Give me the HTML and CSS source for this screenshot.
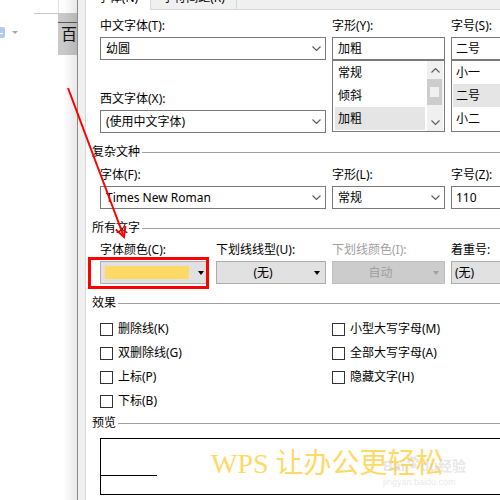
FILE: index.html
```html
<!DOCTYPE html>
<html lang="zh-CN">
<head>
<meta charset="utf-8">
<title>字体</title>
<link rel="stylesheet" href="styles.css">
</head>
<body>
<div class="screen">
  <div class="desk">
    <div class="desk-icon"><span class="desk-icon-line"></span></div>
    <div class="desk-caret"></div>
    <div class="desk-vline"></div>
    <div class="desk-rule"></div>
    <div class="desk-cell"><span class="cell-line"></span><span class="cell-char">百</span></div>
    <div class="desk-shadow"></div>
  </div>

  <div class="dialog">
    <div class="tabs">
      <div class="tab tab-active">字体(N)</div>
      <div class="tab tab-other">字符间距(R)</div>
      <div class="tab-rest"></div>
    </div>

    <div class="page">
      <div class="fields row-top">
        <div class="col col-wide">
          <div class="label">中文字体(T):</div>
          <div class="box combo"><span class="val">幼圆</span><svg class="chev" width="9" height="5" viewBox="0 0 9 5"><polyline points="0.5,0.5 4.5,4.5 8.5,0.5"/></svg></div>
          <div class="label label-western">西文字体(X):</div>
          <div class="box combo"><span class="val">(使用中文字体)</span><svg class="chev" width="9" height="5" viewBox="0 0 9 5"><polyline points="0.5,0.5 4.5,4.5 8.5,0.5"/></svg></div>
        </div>
        <div class="col col-mid">
          <div class="label">字形(Y):</div>
          <div class="box"><span class="val">加粗</span></div>
          <div class="listbox">
            <div class="items">
              <div class="item">常规</div>
              <div class="item">倾斜</div>
              <div class="item sel">加粗</div>
            </div>
            <div class="scrollbar">
              <div class="sb-btn"><svg width="9" height="5" viewBox="0 0 9 5"><polyline points="0.5,4.5 4.5,0.5 8.5,4.5"/></svg></div>
              <div class="thumb"><span class="grip"></span></div>
              <div class="sb-track"></div>
              <div class="sb-btn"><svg width="9" height="5" viewBox="0 0 9 5"><polyline points="0.5,0.5 4.5,4.5 8.5,0.5"/></svg></div>
            </div>
          </div>
        </div>
        <div class="col col-narrow">
          <div class="label">字号(S):</div>
          <div class="box box-narrow"><span class="val">二号</span></div>
          <div class="listbox">
            <div class="items items-full">
              <div class="item">小一</div>
              <div class="item sel">二号</div>
              <div class="item">小二</div>
            </div>
          </div>
        </div>
      </div>

      <div class="group-title gt-complex">复杂文种</div>

      <div class="fields row-mid">
        <div class="col col-wide">
          <div class="label">字体(F):</div>
          <div class="box combo"><span class="val">Times New Roman</span><svg class="chev" width="9" height="5" viewBox="0 0 9 5"><polyline points="0.5,0.5 4.5,4.5 8.5,0.5"/></svg></div>
        </div>
        <div class="col col-mid">
          <div class="label">字形(L):</div>
          <div class="box combo"><span class="val">常规</span><svg class="chev" width="9" height="5" viewBox="0 0 9 5"><polyline points="0.5,0.5 4.5,4.5 8.5,0.5"/></svg></div>
        </div>
        <div class="col col-narrow">
          <div class="label">字号(Z):</div>
          <div class="box box-narrow"><span class="val">110</span></div>
        </div>
      </div>

      <div class="group-title gt-all">所有文字</div>

      <div class="fields row-all">
        <div class="col col-color">
          <div class="label">字体颜色(C):</div>
          <div class="btn color-btn"><span class="swatch"></span><span class="tri"></span></div>
        </div>
        <div class="col col-under">
          <div class="label">下划线线型(U):</div>
          <div class="btn"><span class="btn-text">(无)</span><span class="tri"></span></div>
        </div>
        <div class="col col-mid">
          <div class="label label-off">下划线颜色(I):</div>
          <div class="btn btn-off"><span class="btn-text">自动</span><span class="tri tri-off"></span></div>
        </div>
        <div class="col col-narrow">
          <div class="label">着重号:</div>
          <div class="btn btn-left"><span class="btn-text">(无)</span></div>
        </div>
      </div>

      <div class="group-title gt-fx">效果</div>

      <div class="fields effects">
        <div class="fx-col fx-left">
          <div class="check"><span class="cb"></span>删除线(K)</div>
          <div class="check"><span class="cb"></span>双删除线(G)</div>
          <div class="check"><span class="cb"></span>上标(P)</div>
          <div class="check"><span class="cb"></span>下标(B)</div>
        </div>
        <div class="fx-col">
          <div class="check"><span class="cb"></span>小型大写字母(M)</div>
          <div class="check"><span class="cb"></span>全部大写字母(A)</div>
          <div class="check"><span class="cb"></span>隐藏文字(H)</div>
        </div>
      </div>

      <div class="group-title gt-preview">预览</div>

      <div class="fields preview">
        <span class="pv-rule"></span>
        <span class="pv-text">WPS 让办公更轻松</span>
      </div>
    </div>
  </div>

  <div class="highlight"></div>
  <svg class="annot" width="500" height="500" viewBox="0 0 500 500">
    <line x1="68" y1="88" x2="124" y2="237"/>
    <polyline points="115.8,229.5 124,237 125.4,226"/>
  </svg>
  <div class="watermark">
    <div class="wm-main">Bai<svg class="paw" width="14" height="13" viewBox="0 0 14 13"><ellipse cx="3" cy="5" rx="1.6" ry="2"/><ellipse cx="5.6" cy="2.2" rx="1.6" ry="2"/><ellipse cx="8.8" cy="2.2" rx="1.6" ry="2"/><ellipse cx="11.3" cy="5" rx="1.6" ry="2"/><ellipse cx="7.2" cy="9.5" rx="3.2" ry="2.8"/></svg>du经验</div>
    <div class="wm-url">jingyan.baidu.com</div>
  </div>
</div>
</body>
</html>
```

FILE: styles.css
```css
* { box-sizing: border-box; }
html, body { margin: 0; padding: 0; }
body {
  width: 500px;
  height: 500px;
  overflow: hidden;
  background: #fff;
  font-family: "Noto Sans", "Noto Sans CJK SC", sans-serif;
  font-size: 12px;
  line-height: 16px;
  color: #000;
}
.screen {
  position: relative;
  display: flex;
  width: 500px;
  height: 500px;
  overflow: hidden;
}

/* document window behind the dialog */
.desk {
  position: relative;
  flex: none;
  width: 77px;
  height: 500px;
  background: #fff;
}
.desk-icon {
  position: absolute;
  left: 0;
  top: 27px;
  width: 5px;
  height: 11px;
  background: #b3cbea;
  border-radius: 0 2px 2px 0;
}
.desk-icon-line {
  position: absolute;
  left: 0;
  top: 6px;
  width: 3px;
  height: 1px;
  background: #fff;
}
.desk-caret {
  position: absolute;
  left: 12px;
  top: 31px;
  width: 0;
  height: 0;
  border-left: 3px solid transparent;
  border-right: 3px solid transparent;
  border-top: 3px solid #a8a8a8;
}
.desk-vline {
  position: absolute;
  left: 58px;
  top: 0;
  width: 1px;
  height: 13px;
  background: #e2e2e2;
}
.desk-rule {
  position: absolute;
  left: 34px;
  top: 13px;
  width: 24px;
  height: 1px;
  background: #c8c8c8;
}
.desk-cell {
  position: absolute;
  left: 58px;
  top: 13px;
  width: 19px;
  height: 42px;
  background: #c9c9c9;
}
.cell-line {
  position: absolute;
  left: 0;
  top: 9px;
  width: 19px;
  height: 1px;
  background: #5a5a5a;
}
.cell-char {
  position: absolute;
  left: 3px;
  top: 10px;
  font-family: "Noto Sans CJK SC", sans-serif;
  font-size: 16px;
  line-height: 20px;
  color: #111;
}
.desk-shadow {
  position: absolute;
  right: 0;
  top: 0;
  width: 14px;
  height: 500px;
  background: linear-gradient(to right, rgba(0,0,0,0), rgba(0,0,0,0.09));
}

/* dialog */
.dialog {
  flex: none;
  width: 480px;
  height: 500px;
  border-left: 1px solid #8a8a8a;
  background: #f0f0f0;
  padding-left: 7px;
  display: flex;
  flex-direction: column;
}
.tabs {
  flex: none;
  display: flex;
  height: 24px;
  margin-top: -14px;
}
.tab {
  height: 24px;
  display: flex;
  align-items: center;
  justify-content: center;
}
.tab-active {
  width: 65px;
  background: #fff;
  border-left: 1px solid #d9d9d9;
}
.tab-other {
  width: 87px;
  background: #f0f0f0;
  border-left: 1px solid #d9d9d9;
  border-right: 1px solid #d9d9d9;
  border-bottom: 1px solid #d9d9d9;
}
.tab-rest {
  flex: 1;
  border-bottom: 1px solid #d9d9d9;
}
.page {
  flex: 1;
  background: #fff;
  border-left: 1px solid #d9d9d9;
  padding-left: 6px;
}

.fields {
  margin-left: 8px;
  display: flex;
}
.col { flex: none; display: flex; flex-direction: column; }
.col-wide { width: 226px; }
.col-mid { width: 113px; margin-left: 6px; }
.col-narrow { width: 70px; margin-left: 6px; }
.col-color { width: 107px; }
.col-under { width: 110px; margin-left: 9px; }

.row-top { margin-top: 8px; }
.row-mid { margin-top: 7px; }
.row-all { margin-top: 6px; }

.label {
  height: 16px;
  margin-bottom: 3px;
  white-space: nowrap;
}
.label-western { margin-top: 31px; }
.label-off { color: #a0a0a0; }

.box {
  height: 23px;
  border: 1px solid #7a7a7a;
  display: flex;
  align-items: center;
  padding-left: 5px;
  background: #fff;
  white-space: nowrap;
}
.box-narrow { padding-left: 4px; width: 80px; }
.combo .val { flex: 1; }
.chev {
  flex: none;
  margin-right: 4px;
}
.chev polyline, .sb-btn polyline {
  fill: none;
  stroke: #5a5a5a;
  stroke-width: 1.1;
}

.listbox {
  height: 72px;
  border: 1px solid #7a7a7a;
  display: flex;
  padding: 0 1px;
  background: #fff;
}
.col-narrow .listbox { width: 80px; }
.items {
  width: 91px;
  margin-left: 1px;
}
.items-full { width: auto; flex: 1; margin-left: 0; }
.item {
  height: 23px;
  display: flex;
  align-items: center;
  padding-left: 3px;
}
.item.sel { background: #e5e5e5; }

.scrollbar {
  width: 16px;
  margin-left: 2px;
  background: #f0f0f0;
  display: flex;
  flex-direction: column;
}
.sb-btn {
  height: 18px;
  display: flex;
  align-items: center;
  justify-content: center;
}
.sb-btn:last-child { height: 17px; }
.thumb {
  height: 26px;
  margin: 0 1px 0 0;
  background: #cdcdcd;
  display: flex;
  align-items: center;
  justify-content: center;
}
.grip {
  width: 9px;
  height: 10px;
  background: #f0f0f0;
}
.sb-track { flex: 1; }

.group-title {
  display: flex;
  align-items: center;
  height: 16px;
  white-space: nowrap;
}
.group-title::after {
  content: "";
  flex: 1;
  height: 1px;
  background: #a0a0a0;
  margin-left: 2px;
}
.gt-complex { margin-top: 11px; }
.gt-all { margin-top: 11px; }
.gt-fx { margin-top: 11px; }
.gt-preview { margin-top: 2px; }

.btn {
  height: 23px;
  border: 1px solid #adadad;
  background: #e1e1e1;
  display: flex;
  align-items: center;
}
.btn-text {
  flex: 1;
  text-align: center;
}
.tri {
  flex: none;
  width: 0;
  height: 0;
  border-left: 3.5px solid transparent;
  border-right: 3.5px solid transparent;
  border-top: 4px solid #000;
  margin: 0 5px;
}
.color-btn { padding-left: 4px; }
.swatch {
  width: 84px;
  height: 13px;
  background: #ffd966;
}
.color-btn .tri { margin-left: auto; margin-right: 2px; }
.btn-off {
  background: #cccccc;
  border-color: #bfbfbf;
  color: #a0a0a0;
}
.tri-off { border-top-color: #a0a0a0; }
.btn-left { width: 80px; }
.btn-left .btn-text { text-align: left; padding-left: 3px; }

.effects { margin-top: 6px; }
.fx-col { display: flex; flex-direction: column; }
.fx-left { width: 232px; }
.check {
  height: 24px;
  display: flex;
  align-items: center;
  white-space: nowrap;
}
.cb {
  width: 13px;
  height: 13px;
  border: 1px solid #333;
  margin-right: 5px;
  background: #fff;
}

.preview {
  margin-top: 7px;
  width: 420px;
  height: 57px;
  border: 1px solid #000;
  align-items: flex-start;
}
.pv-rule {
  width: 56px;
  height: 1px;
  background: #000;
  margin-top: 36px;
}
.pv-text {
  margin-left: 54px;
  margin-top: 10px;
  font-family: "Liberation Serif", "Noto Sans CJK SC", serif;
  font-size: 28px;
  line-height: 30px;
  color: #ffd966;
  white-space: nowrap;
}

/* annotation overlays */
.highlight {
  position: absolute;
  left: 88px;
  top: 257px;
  width: 121px;
  height: 32px;
  border: 3px solid #ff0000;
}
.annot {
  position: absolute;
  left: 0;
  top: 0;
  pointer-events: none;
}
.annot line, .annot polyline {
  fill: none;
  stroke: #ff0000;
  stroke-width: 2;
}
.watermark {
  position: absolute;
  left: 383px;
  top: 456px;
  color: rgba(200,200,200,0.45);
  font-family: "Liberation Sans", "Noto Sans CJK SC", sans-serif;
}
.wm-main {
  display: flex;
  align-items: flex-end;
  font-size: 14px;
  line-height: 17px;
  font-weight: bold;
}
.paw { fill: rgba(200,200,200,0.45); margin: 0 1px 6px; }
.wm-url {
  font-size: 9px;
  line-height: 11px;
  margin-top: 2px;
}
```
